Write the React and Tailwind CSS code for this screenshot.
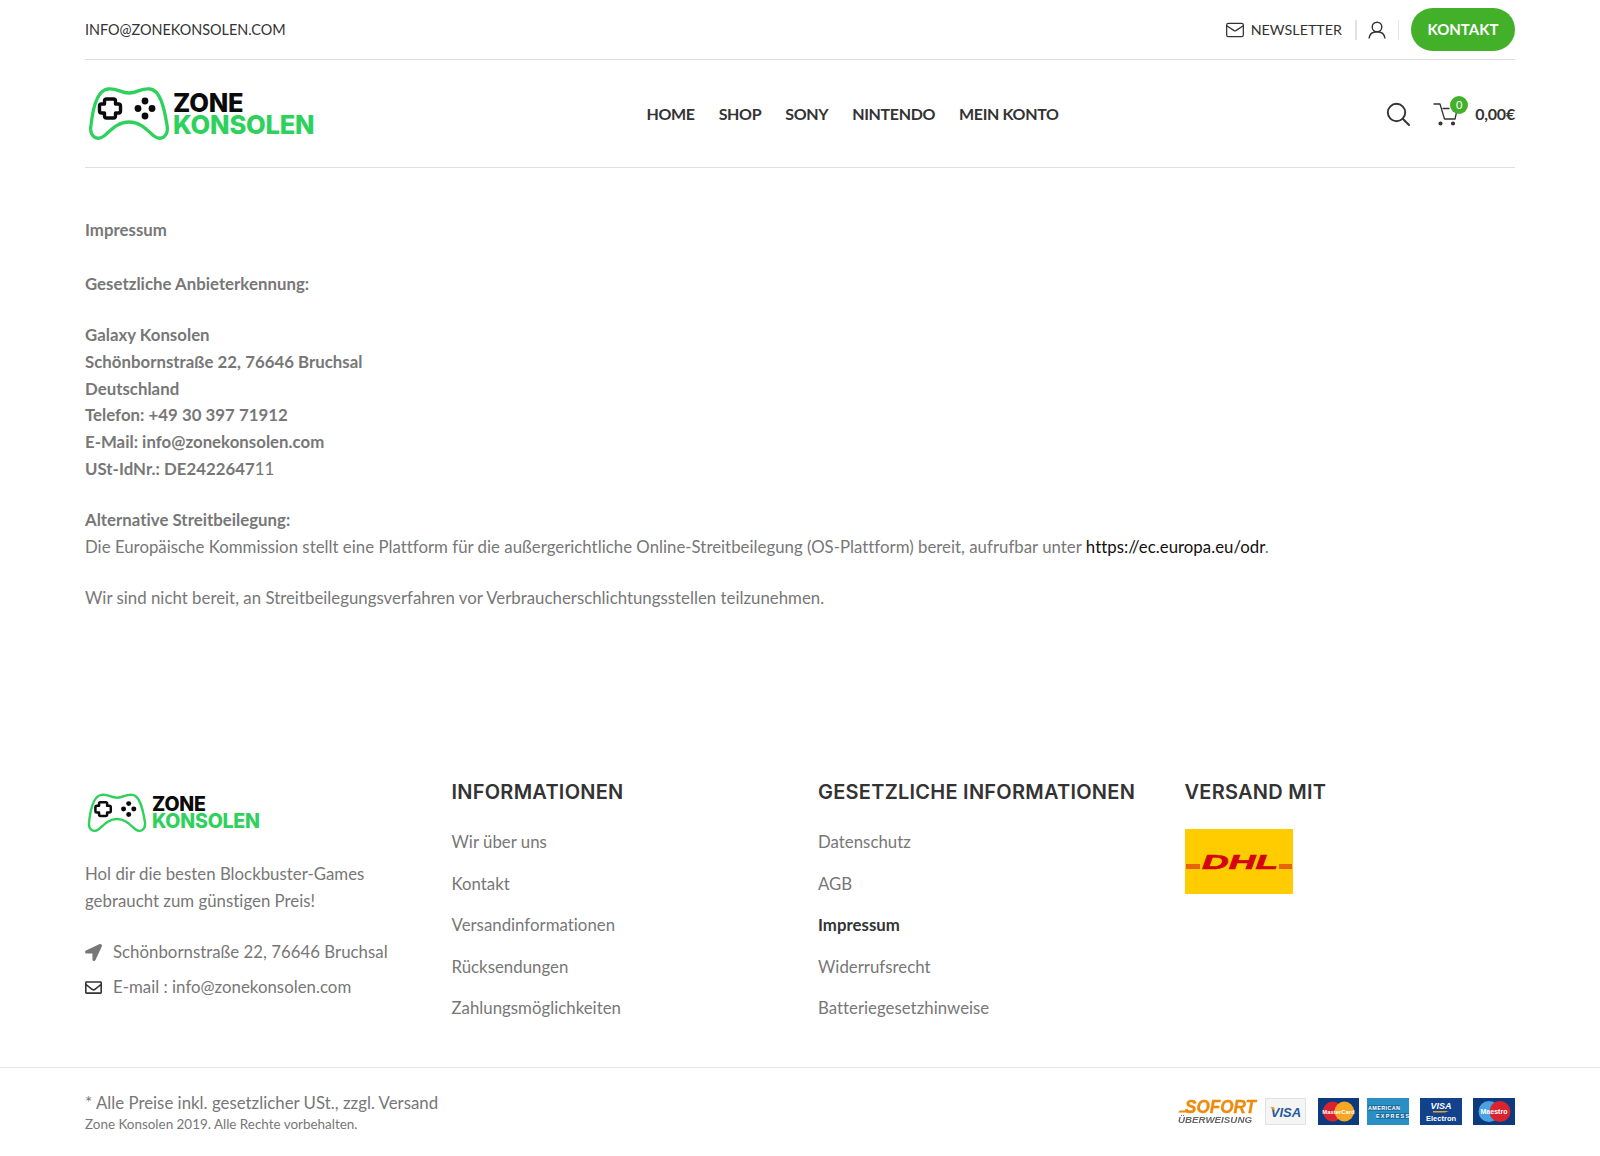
import React from "react";
import { Mail } from "lucide-react";
import { FaLocationArrow, FaRegEnvelope } from "react-icons/fa";

function Pad({ className }) {
  return (
    <svg viewBox="0 0 82 55" className={className} fill="none">
      <path d="M20 2C30 1 32 6 41 6C50 6 52 1 62 2C72 3 76 20 79 38C81 50 73 54 66 49C58 42 52 35 41 35C30 35 24 42 16 49C9 54 1 50 3 38C5 20 10 3 20 2Z" stroke="#2ed15c" strokeWidth="3.300" />
      <path d="M18.500 12h7a2 2 0 0 1 2 2v3h3a2 2 0 0 1 2 2v5a2 2 0 0 1-2 2h-3v3a2 2 0 0 1-2 2h-7a2 2 0 0 1-2-2v-3h-3a2 2 0 0 1-2-2v-5a2 2 0 0 1 2-2h3v-3a2 2 0 0 1 2-2Z" stroke="#0b0b0b" strokeWidth="3.400" strokeLinejoin="round" />
      <circle cx="57" cy="14" r="3.400" fill="#0b0b0b" />
      <circle cx="57" cy="29" r="3.400" fill="#0b0b0b" />
      <circle cx="50" cy="21.500" r="3.400" fill="#0b0b0b" />
      <circle cx="64" cy="21.500" r="3.400" fill="#0b0b0b" />
    </svg>
  );
}

function NavLink({ children }) {
  return <a className="text-[16px] leading-[27px] font-bold text-[#333] tracking-[-0.35px]">{children}</a>;
}

function FooterLink({ children, active }) {
  return (
    <li className={`leading-[27px] ${active ? "font-bold text-[#333]" : "text-[#777]"}`}>{children}</li>
  );
}

function Dhl() {
  return (
    <svg viewBox="0 0 108 65" className="w-[108px] h-[65px] mt-[23px]">
      <rect width="108" height="65" fill="#fc0" />
      <rect x="1" y="35" width="14" height="5" fill="#e8640c" />
      <rect x="94" y="35" width="13" height="5" fill="#e8640c" />
      <text x="55" y="40" textAnchor="middle" fontFamily="'Liberation Sans',sans-serif" fontWeight="700" fontStyle="italic" fontSize="21" fill="#d40511" stroke="#d40511" strokeWidth="0.700" textLength="76" lengthAdjust="spacingAndGlyphs">DHL</text>
    </svg>
  );
}

function Card({ children, bg = "#0d3a7e", className }) {
  return (
    <svg viewBox="0 0 42 27" preserveAspectRatio="none" className={`h-[27px] ${className}`}>
      <rect width="42" height="27" fill={bg} />
      {children}
    </svg>
  );
}

function Payments() {
  const f = "'Liberation Sans',sans-serif";
  return (
    <div className="flex items-center mt-[8px] h-[29px] blur-[0.3px]">
      <svg viewBox="0 0 80 27" className="w-[80px] h-[27px] overflow-visible">
        <path d="M2 12.500h12l-1 2H0Z" fill="#ef8a0a" />
        <text x="7" y="14.500" fontFamily={f} fontWeight="700" fontStyle="italic" fontSize="18" fill="#ef8a0a" stroke="#ef8a0a" strokeWidth="0.400" textLength="71" lengthAdjust="spacingAndGlyphs">SOFORT</text>
        <text x="0" y="25" fontFamily={f} fontWeight="700" fontStyle="italic" fontSize="9" fill="#666" textLength="74" lengthAdjust="spacingAndGlyphs">ÜBERWEISUNG</text>
      </svg>
      <svg viewBox="0 0 41 27" className="w-[41px] h-[27px] ml-[7px]">
        <rect x="0.500" y="0.500" width="40" height="26" fill="#f5f5f5" stroke="#e2e2e2" />
        <text x="21" y="19" textAnchor="middle" fontFamily={f} fontWeight="700" fontStyle="italic" fontSize="13" fill="#1f5b9c">VISA</text>
        <path d="M5 9l4 0 1 4Z" fill="#e9a52a" />
      </svg>
      <Card className="w-[41px] ml-[12px]">
        <circle cx="15" cy="13.500" r="10" fill="#d9232e" />
        <circle cx="27" cy="13.500" r="10" fill="#f5a623" />
        <text x="21" y="16" textAnchor="middle" fontFamily={f} fontWeight="700" fontSize="6" fill="#fff">MasterCard</text>
      </Card>
      <Card bg="#2a8fc4" className="w-[42px] ml-[8px]">
        <rect x="1" y="7" width="32" height="6" fill="#1c6e9f" />
        <rect x="9" y="15" width="33" height="6" fill="#1c6e9f" />
        <text x="1" y="12" fontFamily={f} fontWeight="700" fontSize="5.400" fill="#fff" textLength="32">AMERICAN</text>
        <text x="9" y="20" fontFamily={f} fontWeight="700" fontSize="5.400" fill="#fff" textLength="33">EXPRESS</text>
      </Card>
      <Card bg="#12428c" className="w-[42px] ml-[11px]">
        <text x="21" y="11" textAnchor="middle" fontFamily={f} fontWeight="700" fontStyle="italic" fontSize="9" fill="#fff">VISA</text>
        <path d="M13 13h16l-4 1.500H13Z" fill="#e9a52a" />
        <text x="21" y="23" textAnchor="middle" fontFamily={f} fontWeight="700" fontSize="7.500" fill="#fff">Electron</text>
      </Card>
      <Card className="w-[42px] ml-[11px]">
        <circle cx="16" cy="13.500" r="10.500" fill="#4aa3e0" />
        <circle cx="27" cy="13.500" r="10.500" fill="#d9232e" />
        <text x="21" y="16" textAnchor="middle" fontFamily={f} fontWeight="700" fontSize="7" fill="#fff">Maestro</text>
      </Card>
    </div>
  );
}

export default function App() {
  return (
    <div className="font-['Lato',sans-serif] bg-white min-h-[1156px] text-[#777] text-[16.800px] tracking-[0.025px] leading-[26.880px]">
      <div className="px-[85px]">
        <div className="flex items-center justify-between h-[60px] border-b border-[#e0e0e0]">
          <span className="text-[14.400px] leading-[27px] tracking-normal text-[#333]">INFO@ZONEKONSOLEN.COM</span>
          <div className="flex items-center">
            <Mail className="w-[20px] h-[20px] text-[#333] mr-[6px]" strokeWidth={1.500} />
            <span className="text-[14.300px] leading-[27px] tracking-normal text-[#333] mr-[13px]">NEWSLETTER</span>
            <div className="w-[2px] h-[20px] bg-[#e2e2e2]" />
            <svg viewBox="0 0 18 18" className="w-[18px] h-[18px] ml-[11px] mr-[12px]" fill="none" stroke="#333" strokeWidth="1.400">
              <circle cx="9" cy="6" r="4.800" />
              <path d="M1 17.500c.5-4.500 4-6.700 8-6.700s7.500 2.200 8 6.700" />
            </svg>
            <div className="w-px h-[20px] bg-[#e5e5e5] mr-[12px]" />
            <a className="flex items-center justify-center w-[104px] h-[43px] rounded-full bg-[#43b02a] text-white text-[15px] tracking-normal font-bold">KONTAKT</a>
          </div>
        </div>

        <div className="flex items-center justify-between h-[108px] border-b border-[#e0e0e0]">
          <div className="flex items-center w-[230px] pl-[3px] pt-[2px]">
            <Pad className="w-[82px] h-[55px] shrink-0" />
            <div className="ml-[3px] pb-[2px] font-['Inter',sans-serif] font-extrabold text-[25.500px] leading-[22px] tracking-[-0.2px]">
              <div className="text-[#0b0b0b]">ZONE</div>
              <div className="text-[#2ed15c]">KONSOLEN</div>
            </div>
          </div>
          <nav className="flex items-center gap-[24px] ml-[4px]">
            <NavLink>HOME</NavLink>
            <NavLink>SHOP</NavLink>
            <NavLink>SONY</NavLink>
            <NavLink>NINTENDO</NavLink>
            <NavLink>MEIN KONTO</NavLink>
          </nav>
          <div className="flex items-center">
            <svg viewBox="0 0 24 24" className="w-[24px] h-[24px]" fill="none" stroke="#333" strokeWidth="1.900" strokeLinecap="round">
              <circle cx="10.500" cy="10.500" r="8.700" />
              <path d="M17 17l6 6" />
            </svg>
            <div className="relative ml-[23px] mr-[18px]">
              <svg viewBox="0 0 24 24" className="w-[24px] h-[24px] block" fill="none" stroke="#333" strokeWidth="1.300" strokeLinecap="round" strokeLinejoin="round">
                <path d="M1 2h6l4.500 15H22l2-9" />
                <path d="M10 6.500h6" />
                <circle cx="7.500" cy="21.500" r="1.400" fill="#333" />
                <circle cx="20" cy="21.500" r="1.400" fill="#333" />
              </svg>
              <span className="absolute -top-[6px] -right-[11px] w-[18px] h-[18px] rounded-full bg-[#43b02a] text-white text-[11px] leading-[18px] text-center">0</span>
            </div>
            <span className="text-[16px] leading-[27px] font-bold text-[#333] tracking-[-0.2px]">0,00€</span>
          </div>
        </div>

        <main className="pt-[49px] font-normal">
          <p className="font-bold">Impressum</p>
          <p className="font-bold mt-[27px]">Gesetzliche Anbieterkennung:</p>
          <p className="font-bold mt-[24px]">
            Galaxy Konsolen<br />
            Schönbornstraße 22, 76646 Bruchsal<br />
            Deutschland<br />
            Telefon: +49 30 397 71912<br />
            E-Mail: info@zonekonsolen.com<br />
            USt-IdNr.: DE2422647<span className="font-normal">11</span>
          </p>
          <p className="mt-[24px]">
            <b>Alternative Streitbeilegung:</b><br />
            Die Europäische Kommission stellt eine Plattform für die außergerichtliche Online-Streitbeilegung (OS-Plattform) bereit, aufrufbar unter <a className="text-[#111]">https://ec.europa.eu/odr</a>.
          </p>
          <p className="mt-[24px]">Wir sind nicht bereit, an Streitbeilegungsverfahren vor Verbraucherschlichtungsstellen teilzunehmen.</p>
        </main>

        <footer className="grid grid-cols-[366.500px_366.500px_366.500px_1fr] mt-[167px] h-[288px]">
          <div>
            <div className="flex items-center pl-[2px] mt-[14px]">
              <Pad className="w-[60px] h-[41px] shrink-0" />
              <div className="ml-[5px] font-['Inter',sans-serif] font-extrabold text-[19.500px] leading-[17px] tracking-[-0.200px]">
                <div className="text-[#0b0b0b]">ZONE</div>
                <div className="text-[#2ed15c]">KONSOLEN</div>
              </div>
            </div>
            <p className="mt-[27px]">Hol dir die besten Blockbuster-Games<br />gebraucht zum günstigen Preis!</p>
            <div className="flex items-center mt-[25px]">
              <FaLocationArrow className="w-[17px] h-[17px] text-[#777] mr-[11px]" />
              <span>Schönbornstraße 22, 76646 Bruchsal</span>
            </div>
            <div className="flex items-center mt-[8px]">
              <FaRegEnvelope className="w-[17px] h-[17px] text-[#333] mr-[11px]" />
              <span>E-mail : info@zonekonsolen.com</span>
            </div>
          </div>
          {[
            ["INFORMATIONEN", ["Wir über uns", "Kontakt", "Versandinformationen", "Rücksendungen", "Zahlungsmöglichkeiten"]],
            ["GESETZLICHE INFORMATIONEN", ["Datenschutz", "AGB", "Impressum", "Widerrufsrecht", "Batteriegesetzhinweise"]],
          ].map(([title, items]) => (
            <div key={title}>
              <h3 className="font-['Inter',sans-serif] font-semibold text-[20px] tracking-[0.250px] leading-[27px] text-[#333]">{title}</h3>
              <ul className="mt-[22.500px] flex flex-col gap-[14.500px]">
                {items.map((t) => (
                  <FooterLink key={t} active={t === "Impressum"}>{t}</FooterLink>
                ))}
              </ul>
            </div>
          ))}
          <div>
            <h3 className="font-['Inter',sans-serif] font-semibold text-[20px] tracking-[0.250px] leading-[27px] text-[#333]">VERSAND MIT</h3>
            <Dhl />
          </div>
        </footer>
      </div>

      <div className="border-t border-[#e5e5e5] px-[85px] pt-[21px] flex justify-between items-start">
        <div>
          <p className="leading-[27px]">* Alle Preise inkl. gesetzlicher USt., zzgl. Versand</p>
          <p className="text-[13.440px] leading-[16px] tracking-normal">Zone Konsolen 2019. Alle Rechte vorbehalten.</p>
        </div>
        <Payments />
      </div>
    </div>
  );
}
